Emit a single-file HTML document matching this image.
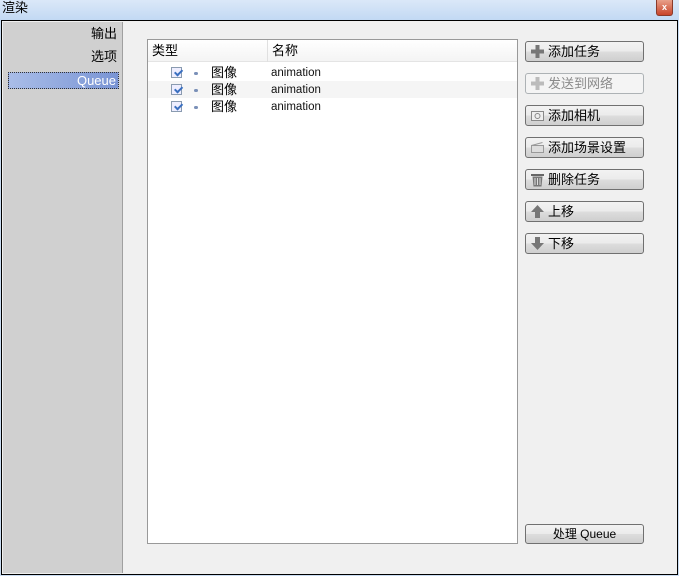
<!DOCTYPE html>
<html><head><meta charset="utf-8"><style>
*{margin:0;padding:0;box-sizing:border-box}
body{width:679px;height:576px;overflow:hidden;background:#c9dcf2;font-family:"Liberation Sans","Noto Sans CJK SC",sans-serif;font-size:12px;color:#000;position:relative}
.title{position:absolute;left:0;top:0;width:679px;height:20px;background:linear-gradient(#dbe8f8,#c2d9f3)}
.title span{position:absolute;left:2px;top:0;font-size:13px;line-height:16px}
.close{position:absolute;left:656px;top:0;width:17px;height:16px;background:linear-gradient(#e8a08a,#c9452a);border:1px solid #8a3b2b;border-top:none;border-radius:0 0 3px 3px;color:#fff;font-size:9px;text-align:center;line-height:14px;font-weight:bold}
.win{position:absolute;left:1px;top:20px;width:677px;height:555px;background:#f0f0f0;border:1px solid #000}
.left{position:absolute;left:1px;top:1px;width:120px;height:551px;background:#d0d0d0;border-right:1px solid #a0a0a0}
.li{position:absolute;right:5px;font-size:13px;line-height:16px}
.sel{position:absolute;left:6px;top:51px;width:111px;height:17px;background:linear-gradient(90deg,#a9bde8,#7994d4);border:1px dotted #333;color:#fff;text-align:right;padding-right:2px;font-size:13px;line-height:15px}
.table{position:absolute;left:145px;top:18px;width:371px;height:505px;background:#fff;border:1px solid #999}
.hdr{position:absolute;left:0;top:0;width:369px;height:22px;background:linear-gradient(#fff,#f4f4f4);border-bottom:1px solid #e4e4e4}
.hdr span{position:absolute;top:3px;font-size:13px;line-height:16px}
.hdr .div{position:absolute;left:119px;top:0;width:1px;height:22px;background:#e0e0e0}
.row{position:absolute;left:0;width:369px;height:17px}
.row.alt{background:#f5f5f5}
.cb{position:absolute;left:23px;top:3px;width:11px;height:11px;border:1px solid #8a9bb0;background:#eef;}
.cb:after{content:"";position:absolute;left:2px;top:5px;width:6px;height:3px;border-left:2px solid #3a6fc0;border-bottom:2px solid #3a6fc0;transform:rotate(-45deg);transform-origin:0 0}
.dot{position:absolute;left:46px;top:8px;width:4px;height:3px;background:#7a90b8;border-radius:2px}
.r1{position:absolute;left:63px;top:0;font-size:13px;line-height:17px}
.r2{position:absolute;left:123px;top:1px;font-size:11.5px;line-height:17px;color:#111}
.btn{position:absolute;left:525px;width:119px;height:21px;border:1px solid #707070;border-radius:3px;background:linear-gradient(#f2f2f2 0%,#ebebeb 50%,#dddddd 51%,#cfcfcf 100%);font-size:13px;line-height:19px;padding-left:22px}
.btn.dis{color:#8a8a8a;border-color:#adb2b5;background:#f4f4f4}
.ic{position:absolute;left:4px;top:2px;width:15px;height:15px}
</style></head><body>
<div class="title"><span>渲染</span></div>
<div class="close">x</div>
<div class="win">
 <div class="left">
  <div class="li" style="top:4px">输出</div>
  <div class="li" style="top:27px">选项</div>
 </div>
 <div class="sel">Queue</div>
 <div class="table">
  <div class="hdr"><span style="left:4px">类型</span><div class="div"></div><span style="left:124px">名称</span></div>
  <div class="row" style="top:24px"><div class="cb"></div><div class="dot"></div><span class="r1">图像</span><span class="r2">animation</span></div>
  <div class="row alt" style="top:41px"><div class="cb"></div><div class="dot"></div><span class="r1">图像</span><span class="r2">animation</span></div>
  <div class="row" style="top:58px"><div class="cb"></div><div class="dot"></div><span class="r1">图像</span><span class="r2">animation</span></div>
 </div>
</div>
<div class="btn" style="top:41px"><svg class="ic" viewBox="0 0 15 15"><path d="M5.5 1h4v4.5H14v4H9.5V14h-4V9.5H1v-4h4.5z" fill="#777"/></svg>添加任务</div>
<div class="btn dis" style="top:73px"><svg class="ic" viewBox="0 0 15 15"><path d="M5.5 1h4v4.5H14v4H9.5V14h-4V9.5H1v-4h4.5z" fill="#bbb"/></svg>发送到网络</div>
<div class="btn" style="top:105px"><svg class="ic" viewBox="0 0 15 15"><rect x="1.5" y="3.5" width="12" height="9" fill="#eee" stroke="#888"/><circle cx="7.5" cy="8" r="2.5" fill="none" stroke="#888"/></svg>添加相机</div>
<div class="btn" style="top:137px"><svg class="ic" viewBox="0 0 15 15"><rect x="1.5" y="5.5" width="12" height="7" fill="#ddd" stroke="#999"/><path d="M1.5 5.5l11-3" stroke="#999"/></svg>添加场景设置</div>
<div class="btn" style="top:169px"><svg class="ic" viewBox="0 0 15 15"><rect x="1" y="2" width="13" height="2" fill="#666"/><path d="M2.5 4.5h10l-1 10h-8z" fill="#777"/><path d="M5 6v7M7.5 6v7M10 6v7" stroke="#ddd"/></svg>删除任务</div>
<div class="btn" style="top:201px"><svg class="ic" viewBox="0 0 15 15"><path d="M7.5 1L14 8H10v6H5V8H1z" fill="#777"/></svg>上移</div>
<div class="btn" style="top:233px"><svg class="ic" viewBox="0 0 15 15"><path d="M7.5 14L14 7H10V1H5v6H1z" fill="#777"/></svg>下移</div>
<div class="btn" style="top:524px;padding-left:0;text-align:center;height:20px;font-size:12px;line-height:18px">处理 Queue</div>
</body></html>
